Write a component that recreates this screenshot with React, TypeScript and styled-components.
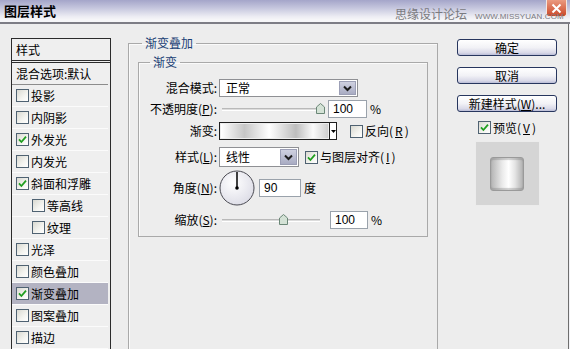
import React from "react";
import styled, { createGlobalStyle } from "styled-components";

const GlobalStyle = createGlobalStyle`
  * { box-sizing: border-box; }
  html, body { margin: 0; padding: 0; background: #ededed; }
  body {
    font-family: "Noto Sans CJK SC", "Liberation Sans", sans-serif;
    font-size: 12px;
    line-height: 16px;
    color: #000;
  }
`;

const Window = styled.div`
  width: 570px;
  height: 349px;
  overflow: hidden;
  display: flex;
  flex-direction: column;
  background: #ededed;
`;

const TitleBar = styled.div`
  position: relative;
  flex: none;
  height: 24px;
  display: flex;
  align-items: flex-start;
  background: linear-gradient(180deg, #a4a5c9 0%, #c4c5dd 35%, #ececf3 75%, #f6f6f8 90%);
  border-bottom: 2px solid #7d7d85;
`;

const Title = styled.div`
  padding-left: 4px;
  font-size: 13px;
  font-weight: bold;
  line-height: 22px;
`;

const CloseButton = styled.div`
  margin-left: auto;
  margin-right: 3px;
  width: 21px;
  height: 17px;
  border: 1px solid #f3e6df;
  border-top: none;
  border-radius: 0 0 3px 3px;
  background: linear-gradient(180deg, #ea9a80, #cc4828);
  display: flex;
  align-items: center;
  justify-content: center;
`;

const Watermark = styled.div`
  position: absolute;
  left: 395px;
  top: 6px;
  display: flex;
  align-items: baseline;
  gap: 8px;
  color: #7a7a80;
  pointer-events: none;
`;

const WatermarkCn = styled.span`
  font-size: 12px;
  line-height: 16px;
`;

const WatermarkEn = styled.span`
  font-family: "Liberation Sans", sans-serif;
  font-size: 8px;
  letter-spacing: 0.1px;
`;

const Body = styled.div`
  flex: 1;
  min-height: 0;
  display: flex;
  align-items: flex-start;
  padding-left: 11px;
  box-shadow: inset -1px 0 #f2f2f6, inset -2px 0 #6e6e6e;
`;

/* ---------- left style list ---------- */
const StyleList = styled.div`
  flex: none;
  width: 100px;
  margin-top: 14px;
  align-self: stretch;
  border: 1px solid #2b2b2b;
  border-bottom: none;
  background: #efefef;
  display: flex;
  flex-direction: column;
`;

const ListHeader = styled.div`
  height: 24px;
  padding-left: 4px;
  line-height: 21px;
  border-bottom: 3px double #2b2b2b;
`;

const ListItem = styled.div<{ $indent?: boolean; $selected?: boolean; $strong?: boolean }>`
  flex: none;
  height: 22px;
  display: flex;
  align-items: center;
  gap: 2px;
  padding-left: ${(p) => (p.$indent ? 20 : 4)}px;
  margin-right: 2px;
  background: ${(p) => (p.$selected ? "#b3b3c2" : "transparent")};
  border-bottom: 1px solid ${(p) => (p.$strong ? "#8c8c8c" : "#fbfbfb")};
`;

/* ---------- checkbox ---------- */
const CheckBoxFrame = styled.span`
  flex: none;
  width: 13px;
  height: 13px;
  border: 1px solid #4f6272;
  background: linear-gradient(135deg, #d9d9d1 0%, #f4f4f0 60%, #ffffff 100%);
  display: inline-flex;
  align-items: center;
  justify-content: center;
`;

function CheckBox({ checked }: { checked?: boolean }) {
  return (
    <CheckBoxFrame>
      {checked && (
        <svg width="9" height="9" viewBox="0 0 9 9">
          <path d="M1 4.4 L3.4 7 L8 1.6" stroke="#1f9e1f" strokeWidth="1.8" fill="none" />
        </svg>
      )}
    </CheckBoxFrame>
  );
}

/* ---------- group boxes ---------- */
const MainGroup = styled.fieldset`
  flex: none;
  margin: 11px 0 0 17px;
  padding: 0;
  width: 310px;
  height: 330px;
  min-width: 0;
  border: 1px solid #a9a9a9;
  box-shadow: inset 1px 1px #fafafa;
`;

const InnerGroup = styled.fieldset`
  margin: 3px 0 0 9px;
  padding: 9px 0 7px 0;
  width: 290px;
  min-width: 0;
  border: 1px solid #a9a9a9;
  box-shadow: inset 1px 1px #fafafa;
`;

const GroupLegend = styled.legend<{ $offset: number }>`
  margin-left: ${(p) => p.$offset}px;
  padding: 0 3px;
  font-size: 12px;
  line-height: 16px;
  color: #1a3f75;
`;

const Row = styled.div<{ $h: number; $top: number }>`
  display: flex;
  align-items: center;
  height: ${(p) => p.$h}px;
  margin-top: ${(p) => p.$top}px;
`;

const FieldLabel = styled.div`
  flex: none;
  width: 78px;
  margin-right: 2px;
  text-align: right;
  white-space: nowrap;
`;

const Suffix = styled.span<{ $gap: number }>`
  margin-left: ${(p) => p.$gap}px;
  white-space: nowrap;
`;

/* select */
const SelectBox = styled.div<{ $w: number }>`
  flex: none;
  width: ${(p) => p.$w}px;
  height: 100%;
  border: 1px solid #8f9094;
  background: #fff;
  display: flex;
  align-items: center;
  padding: 1px;
`;

const SelectText = styled.span`
  flex: 1;
  padding-left: 5px;
`;

const SelectButton = styled.span`
  flex: none;
  width: 17px;
  height: 100%;
  border: 1px solid #9c9fb6;
  background: linear-gradient(180deg, #cfd1e0, #a9acc3);
  display: flex;
  align-items: center;
  justify-content: center;
`;

function Select({ width, value }: { width: number; value: string }) {
  return (
    <SelectBox $w={width}>
      <SelectText>{value}</SelectText>
      <SelectButton>
        <svg width="9" height="7" viewBox="0 0 9 7">
          <polyline points="1,1.5 4.5,5 8,1.5" stroke="#1d1d1d" strokeWidth="2" fill="none" />
        </svg>
      </SelectButton>
    </SelectBox>
  );
}

/* slider */
const SliderBox = styled.div<{ $w: number }>`
  position: relative;
  flex: none;
  width: ${(p) => p.$w}px;
  height: 100%;
`;

const SliderTrack = styled.div`
  position: absolute;
  left: 3px;
  width: 98px;
  top: 50%;
  margin-top: -1px;
  height: 3px;
  border-top: 1px solid #b9b9b9;
  border-bottom: 1px solid #ffffff;
  background: #dcdcdc;
`;

const SliderThumb = styled.svg`
  position: absolute;
  top: 50%;
  margin-top: -6px;
`;

function Slider({ width, fraction }: { width: number; fraction: number }) {
  const center = 3 + fraction * 98;
  return (
    <SliderBox $w={width}>
      <SliderTrack />
      <SliderThumb width="9" height="11" viewBox="0 0 9 11" style={{ left: center - 4.5 }}>
        <polygon points="0.5,4 4.5,0.5 8.5,4 8.5,10.5 0.5,10.5" fill="#d4e2d6" stroke="#6b8777" />
      </SliderThumb>
    </SliderBox>
  );
}

/* numeric input */
const NumInput = styled.div<{ $w: number }>`
  flex: none;
  width: ${(p) => p.$w}px;
  height: 100%;
  border: 1px solid #9aa2ab;
  background: #fff;
  padding-left: 4px;
  display: flex;
  align-items: center;
  font-family: "Liberation Sans", sans-serif;
  font-size: 12px;
`;

/* gradient picker */
const GradientBox = styled.div`
  flex: none;
  width: 118px;
  height: 100%;
  border: 1px solid #1e1e1e;
  display: flex;
`;

const GradientFill = styled.div`
  flex: 1;
  margin: 1px;
  background: linear-gradient(
    90deg,
    #ffffff 0%,
    #c6c6c6 22%,
    #ffffff 45%,
    #bdbdbd 70%,
    #fbfbfb 86%,
    #cfcfcf 100%
  );
`;

const GradientArrow = styled.div`
  flex: none;
  width: 7px;
  border-left: 1px solid #1e1e1e;
  background: #fff;
  display: flex;
  align-items: center;
  justify-content: center;
`;

const CheckOption = styled.div<{ $gap: number }>`
  display: flex;
  align-items: center;
  gap: 2px;
  margin-left: ${(p) => p.$gap}px;
  white-space: nowrap;
`;

/* right column */
const SideColumn = styled.div`
  flex: none;
  width: 100px;
  margin: 15px 0 0 19px;
  display: flex;
  flex-direction: column;
  align-items: center;
`;

const DialogButton = styled.div<{ $top: number }>`
  width: 100px;
  height: 17px;
  margin-top: ${(p) => p.$top}px;
  border: 1px solid #27365e;
  border-radius: 3px;
  background: linear-gradient(180deg, #ffffff 0%, #f2f2f6 50%, #d9d9e8 85%, #b9bcd6 100%);
  display: flex;
  align-items: center;
  justify-content: center;
  line-height: 15px;
  white-space: nowrap;
`;

const PreviewBox = styled.div`
  width: 65px;
  height: 65px;
  margin-top: 7px;
  background: #d5d5d5;
  border: 1px solid #ececec;
  display: flex;
  align-items: center;
  justify-content: center;
`;

const PreviewSwatch = styled.div`
  width: 34px;
  height: 34px;
  border: 1px solid #9a9a9a;
  border-radius: 3px;
  background: linear-gradient(90deg, #b4b4b4 0%, #eaeaea 35%, #ffffff 55%, #e4e4e4 75%, #b0b0b0 100%);
  box-shadow: inset 0 2px 1px rgba(120, 120, 120, 0.35), inset 0 -2px 1px rgba(120, 120, 120, 0.35);
`;

const listItems: { label: string; checked?: boolean; box?: boolean; indent?: boolean; selected?: boolean }[] = [
  { label: "投影", box: true },
  { label: "内阴影", box: true },
  { label: "外发光", box: true, checked: true },
  { label: "内发光", box: true },
  { label: "斜面和浮雕", box: true, checked: true },
  { label: "等高线", box: true, indent: true },
  { label: "纹理", box: true, indent: true },
  { label: "光泽", box: true },
  { label: "颜色叠加", box: true },
  { label: "渐变叠加", box: true, checked: true, selected: true },
  { label: "图案叠加", box: true },
  { label: "描边", box: true },
];

export default function App() {
  return (
    <>
      <GlobalStyle />
      <Window>
        <TitleBar>
          <Title>图层样式</Title>
          <CloseButton>
            <svg width="11" height="11" viewBox="0 0 11 11">
              <path d="M1.5 1.5 L9.5 9.5 M9.5 1.5 L1.5 9.5" stroke="#fff" strokeWidth="2" />
            </svg>
          </CloseButton>
          <Watermark>
            <WatermarkCn>思缘设计论坛</WatermarkCn>
            <WatermarkEn>WWW.MISSYUAN.COM</WatermarkEn>
          </Watermark>
        </TitleBar>
        <Body>
          <StyleList>
            <ListHeader>样式</ListHeader>
            <ListItem $strong>混合选项:默认</ListItem>
            {listItems.map((it) => (
              <ListItem key={it.label} $indent={it.indent} $selected={it.selected}>
                <CheckBox checked={it.checked} />
                {it.label}
              </ListItem>
            ))}
          </StyleList>

          <MainGroup>
            <GroupLegend $offset={13}>渐变叠加</GroupLegend>
            <InnerGroup>
              <GroupLegend $offset={11}>渐变</GroupLegend>
              <Row $h={18} $top={0}>
                <FieldLabel>混合模式:</FieldLabel>
                <Select width={139} value="正常" />
              </Row>
              <Row $h={18} $top={3}>
                <FieldLabel>
                  不透明度(<u>P</u>):
                </FieldLabel>
                <Slider width={109} fraction={1} />
                <NumInput $w={39}>100</NumInput>
                <Suffix $gap={3}>%</Suffix>
              </Row>
              <Row $h={18} $top={4}>
                <FieldLabel>渐变:</FieldLabel>
                <GradientBox>
                  <GradientFill />
                  <GradientArrow>
                    <svg width="5" height="3" viewBox="0 0 5 3">
                      <polygon points="0,0 5,0 2.5,3" fill="#000" />
                    </svg>
                  </GradientArrow>
                </GradientBox>
                <CheckOption $gap={13}>
                  <CheckBox />
                  反向(<u>R</u>)
                </CheckOption>
              </Row>
              <Row $h={20} $top={7}>
                <FieldLabel>
                  样式(<u>L</u>):
                </FieldLabel>
                <Select width={80} value="线性" />
                <CheckOption $gap={6}>
                  <CheckBox checked />
                  与图层对齐(<u>I</u>)
                </CheckOption>
              </Row>
              <Row $h={36} $top={3}>
                <FieldLabel>
                  角度(<u>N</u>):
                </FieldLabel>
                <svg width="36" height="36" viewBox="0 0 36 36">
                  <defs>
                    <radialGradient id="dialFill" cx="40%" cy="35%" r="70%">
                      <stop offset="0%" stopColor="#ffffff" />
                      <stop offset="100%" stopColor="#dcdce6" />
                    </radialGradient>
                  </defs>
                  <circle cx="18" cy="18" r="17" fill="url(#dialFill)" stroke="#4a4a52" strokeWidth="1" />
                  <line x1="18" y1="18" x2="18" y2="2" stroke="#000" strokeWidth="1.5" />
                  <circle cx="18" cy="18" r="1.8" fill="#000" />
                </svg>
                <NumInput $w={42} style={{ height: 18, marginLeft: 4 }}>
                  90
                </NumInput>
                <Suffix $gap={3}>度</Suffix>
              </Row>
              <Row $h={18} $top={5}>
                <FieldLabel>
                  缩放(<u>S</u>):
                </FieldLabel>
                <Slider width={111} fraction={0.628} />
                <NumInput $w={38}>100</NumInput>
                <Suffix $gap={3}>%</Suffix>
              </Row>
            </InnerGroup>
          </MainGroup>

          <SideColumn>
            <DialogButton $top={0}>确定</DialogButton>
            <DialogButton $top={11}>取消</DialogButton>
            <DialogButton $top={11}>
              新建样式(<u>W</u>)...
            </DialogButton>
            <CheckOption $gap={0} style={{ marginTop: 9, height: 13 }}>
              <CheckBox checked />
              预览(<u>V</u>)
            </CheckOption>
            <PreviewBox>
              <PreviewSwatch />
            </PreviewBox>
          </SideColumn>
        </Body>
      </Window>
    </>
  );
}
